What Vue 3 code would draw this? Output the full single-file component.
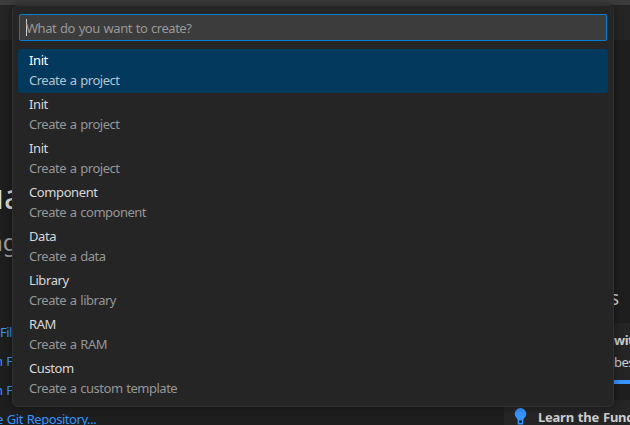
<script setup>
import { ref } from 'vue'

const query = ref('')
const selected = ref(0)
const items = [
  { label: 'Init', detail: 'Create a project' },
  { label: 'Init', detail: 'Create a project' },
  { label: 'Init', detail: 'Create a project' },
  { label: 'Component', detail: 'Create a component' },
  { label: 'Data', detail: 'Create a data' },
  { label: 'Library', detail: 'Create a library' },
  { label: 'RAM', detail: 'Create a RAM' },
  { label: 'Custom', detail: 'Create a custom template' }
]
</script>

<template>
  <div class="window">
    <div class="titlebar"></div>
    <div class="tabs"></div>
    <main class="welcome">
      <section class="start">
        <h1>ua</h1>
        <p class="tagline">ng</p>
        <nav>
          <a class="new-file">Fil</a>
          <a class="open-file">n F</a>
          <a class="open-folder">n F</a>
          <a class="clone">e Git Repository...</a>
        </nav>
      </section>
      <section class="guides">
        <h2>s</h2>
        <div class="card first">
          <strong>with</strong>
          <span>best</span>
          <div class="progress"></div>
        </div>
        <div class="card second">
          <svg width="14" height="18" viewBox="0 0 14 18">
            <path d="M6.500 0a5.800 5.800 0 0 0-5.800 5.800c0 2.200 1.300 3.500 2.300 4.800.5.7.7 1.300.7 2V16.500h5.600v-3.900c0-.7.2-1.300.7-2 1-1.300 2.300-2.600 2.300-4.800A5.800 5.800 0 0 0 6.500 0Z" fill="#3794ff" />
            <path d="M5.200 12.300h2.600v2.700H5.200z" fill="#252526" />
          </svg>
          <strong>Learn the Fundamentals</strong>
        </div>
      </section>
    </main>

    <div class="palette">
      <div class="input"><i class="caret"></i><span v-if="!query">What do you want to create?</span></div>
      <ul>
        <li v-for="(item, i) in items" :key="i" :class="{ selected: i === selected }">
          <div class="label">{{ item.label }}</div>
          <div class="detail">{{ item.detail }}</div>
        </li>
      </ul>
    </div>
  </div>
</template>

<style>
body { margin: 0; overflow: hidden; background: #1e1e1e; }
</style>

<style scoped>
* { box-sizing: border-box; }
.window {
  position: relative;
  width: 630px;
  height: 425px;
  overflow: hidden;
  background: #1e1e1e;
  color: #ccc;
  font: 13px/20px "Noto Sans", "Open Sans", sans-serif;
  letter-spacing: -0.5px;
  word-spacing: 0.9px;
  white-space: nowrap;
}
.titlebar { height: 5px; background: #3c3c3c; }
.tabs { height: 35px; background: #252526; }
.welcome { display: flex; height: 385px; }
.start { width: 504px; flex: none; padding-top: 134px; overflow: hidden; }
h1 { margin: 0 0 0 -17px; color: #dadada; font-size: 34px; font-weight: 400; line-height: 44px; letter-spacing: 0; }
.tagline { margin: 8px 0 0 -12px; color: #9d9d9d; font-size: 24px; line-height: 32px; letter-spacing: 0; }
nav { display: flex; flex-direction: column; padding-top: 64px; color: #3794ff; }
nav a { height: 29px; line-height: 20px; }
.open-file, .open-folder { margin-left: -5px; }
.clone { margin-left: -4px; letter-spacing: -0.45px; }
.guides { width: 126px; flex: none; padding-top: 247px; }
h2 { margin: 0 0 14px; padding-left: 106px; font-size: 19px; font-weight: 400; line-height: 22px; letter-spacing: 0; }
.card { background: #252526; overflow: hidden; }
.first { height: 61px; padding: 6px 0 0 110px; display: flex; flex-direction: column; }
.first strong { line-height: 22px; }
.first span { line-height: 22px; }
.progress { height: 4px; margin: 7px 0 0 -110px; background: #3794ff; }
.second { height: 60px; margin-top: 16px; padding: 8px 0 0 10px; display: flex; align-items: flex-start; gap: 10px; }
.second svg { flex: none; }
.second strong { line-height: 18px; letter-spacing: -0.25px; }
.palette {
  position: absolute;
  left: 12px;
  top: 5px;
  width: 602px;
  height: 402px;
  padding: 8px 5px;
  background: #252526;
  border: 1px solid #303031;
  border-radius: 6px;
  box-shadow: 0 0 8px 1px rgba(0, 0, 0, 0.32);
}
.input {
  display: flex;
  align-items: center;
  height: 27px;
  margin: 0 1px;
  padding-left: 6px;
  color: #989898;
  background: #3c3c3c;
  border: 1px solid #007fd4;
  border-radius: 2px;
}
.caret { width: 1px; height: 17px; margin-right: -1px; background: #ccc; }
.input span { letter-spacing: -0.48px; }
ul { margin: 8px 0 0; padding: 0; list-style: none; }
li { height: 44px; padding: 1px 11px; border-radius: 3px; }
.label { color: #d8d8d8; letter-spacing: -0.4px; }
.detail { color: #969696; }
.selected { background: #04395e; }
.selected .label { color: #fff; }
.selected .detail { color: #b4c4cf; }
</style>
